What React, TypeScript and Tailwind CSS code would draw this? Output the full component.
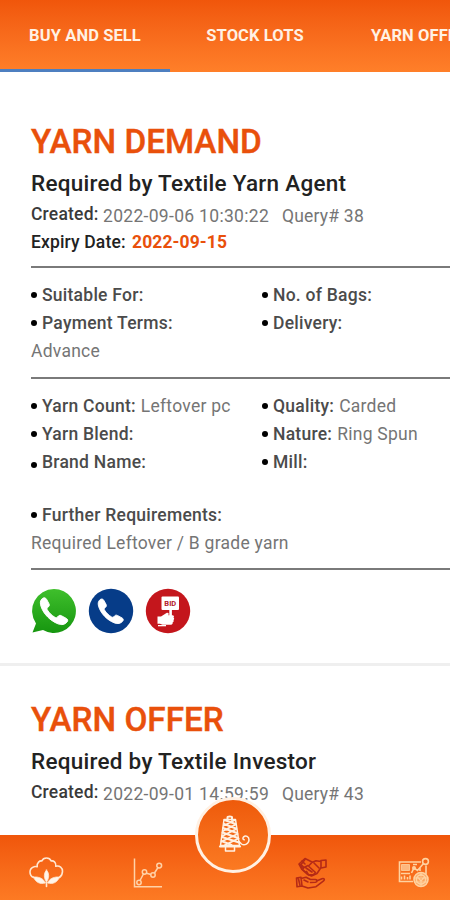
import React from "react";

const HANDSET =
  "M10.500 10.800c1.600-1.400 3.500-.9 4.400.8l2.500 4.600c.7 1.500 0 2.500-1.100 3.400-1.200.9-1.300 1.700-.7 2.700 1.900 3.200 4.600 5.700 7.800 7.600 1.100.6 1.900.6 2.700-.4 1.200-1.500 2.400-2 3.900-1.200l5 2.700c1.600.9 1.900 2.200.8 3.600-2.300 2.800-5.600 3.400-9.200 2C18.800 33.500 12 27 9.200 18.800c-1-3.200-1.100-5.900 1.300-8z";

function WhatsAppIcon() {
  return (
    <svg className="h-[46px] w-[46px]" viewBox="0 0 46 46">
      <defs>
        <linearGradient id="wa" x1="0" y1="0" x2="0" y2="1">
          <stop offset="0" stopColor="#3fbf2c" />
          <stop offset="1" stopColor="#16960f" />
        </linearGradient>
      </defs>
      <path d="M23 1a22 22 0 1 1-11 41.100L1.500 44.500 5 35.500A22 22 0 0 1 23 1z" fill="url(#wa)" />
      <path d={HANDSET} fill="#fff" stroke="#fff" strokeWidth="1" transform="translate(1 0) scale(.98)" />
    </svg>
  );
}

function CallIcon() {
  return (
    <svg className="h-[46px] w-[46px]" viewBox="0 0 46 46">
      <circle cx="23" cy="23" r="22.200" fill="#063c88" />
      <path d={HANDSET} fill="#fff" stroke="#fff" strokeWidth="1" transform="translate(2.500 2) scale(.9)" />
    </svg>
  );
}

function BidIcon() {
  return (
    <svg className="h-[46px] w-[46px]" viewBox="0 0 46 46">
      <circle cx="23" cy="23" r="22.200" fill="#c4161c" />
      <rect x="16.500" y="8.500" width="17.500" height="13.500" rx="1" fill="#fff" />
      <text x="25.300" y="18" textAnchor="middle" fontSize="7.500" fontWeight="700" fill="#b3202a" fontFamily="Roboto, sans-serif">BID</text>
      <path d="M24.300 21h2.600v7h-2.600z" fill="#fff" />
      <path d="M12.500 28.500h3.500l5.500-3.500c1.400-.7 2.800.4 2 1.700l-.2.500h4.200c1.500 0 2 1.700.9 2.400 1 .6 1 1.900 0 2.400.7.9.3 2-.7 2.300.2 1.500-.5 2.500-1.700 2.500h-8.500l-2.500-1h-2.500z" fill="#fff" />
      <path d="M13 37h8v1.300h-8z" fill="#fff" />
    </svg>
  );
}

function CottonIcon() {
  return (
    <svg className="h-[34px] w-[36px]" viewBox="0 0 36 34" fill="none" stroke="#ffe6cf" strokeWidth="1.600" strokeLinecap="round" strokeLinejoin="round">
      <path d="M5.500 21.500C1 19.500.5 12.500 6 10.800c1-.4 2-.3 3.200 0C8.500 6.500 12 4.500 13.800 5 15.500 1 21.500 1 23.200 5c2-.6 5.300 1.200 4.600 5.300 4-1 6.700 1.500 6.700 5 0 2.700-1 4.700-3 6.200" />
      <path d="M18.500 14c-2.800 3-3 8 0 12 3-4 2.800-9 0-12z" fill="#fff5ea" strokeWidth=".8" />
      <path d="M5.500 21c2 5.500 6.500 7.500 12 6-2-4.500-6.500-6.500-12-6zM31.500 21c-2 5.500-6.500 7.500-12 6 2-4.500 6.500-6.500 12-6z" fill="#fff5ea" strokeWidth=".8" />
      <path d="M18.500 26v4.500" />
    </svg>
  );
}

function ChartIcon() {
  return (
    <svg className="h-[32px] w-[32px]" viewBox="0 0 32 32" fill="none" stroke="#ffd2a8" strokeWidth="1.500">
      <path d="M2.500 1.500v28.300H30" />
      <path d="M8 23.500l3.700-7M14.500 16.200l4.500 1.300M22.500 16l3.500-5.500" />
      <circle cx="7" cy="25.500" r="2.200" />
      <circle cx="12.500" cy="15" r="2.200" />
      <circle cx="21" cy="18" r="2.200" />
      <circle cx="27.200" cy="8.600" r="2.400" />
    </svg>
  );
}

function HandsIcon() {
  return (
    <svg className="h-[34px] w-[36px]" viewBox="0 0 36 34" fill="none" stroke="#b52a16" strokeWidth="1.600" strokeLinecap="round" strokeLinejoin="round">
      <path d="M32 4v7l-5 1V4.500zM27 5.500l-5-.8-3.500 1.600L11 2.500 5 8l3 5.500 5 4.500 4.500 2 5.500-2.500 4-6" />
      <path d="M11 3.500L7 8.500l3 3 4-2 2 2 5.500 5M10 11.500L8.500 13.500l3 2.500M12 12l6 4M20 7l5 5M17.500 7l-3 3M12.500 15.500l2 3.500 5-.5 2-2M8 5l3 3M6 8.500l2 3" />
      <path d="M2.500 22l4.500-.7 1 8.700-5 .8zM7 22.500l5-1.200 4.500 2.200h5c2 0 2.200 2.500 0 2.800l-5 .2M22.500 25l5.500-2.300c2-.7 3.200 1 1.600 2.200L22 30.700l-8 1.300-6-2M4.500 23l1.400 6M10 24l4 2" />
    </svg>
  );
}

function BoardIcon() {
  return (
    <svg className="h-[34px] w-[34px]" viewBox="0 0 34 34" fill="none" stroke="#ffd2a0" strokeWidth="1.600">
      <path d="M25 6H3.500v19.500H17M30 9.500V18" />
      <path d="M5.500 8.500h8v6h-8z" fill="#ffd2a0" fillOpacity=".75" strokeWidth=".8" />
      <path d="M5 17.500h9M5.500 23.500v-3M8.500 23.500v-4M11.500 23.500v-2.500M14 23.500v-4M15.500 17l2.500-5 3.500 2.500 6-7M17 8.500h4M24 12v3" />
      <circle cx="29.500" cy="5.500" r="2.900" />
      <circle cx="18" cy="12" r="1.200" />
      <circle cx="25" cy="23.500" r="7" fill="#fba45f" />
      <circle cx="25" cy="23.500" r="4.600" />
      <path d="M18 22h14M18.500 26h13M25 16.500v4M21.500 21l3.500 4 3.500-4M25 25v5" strokeWidth="1.200" />
    </svg>
  );
}

function SpoolIcon() {
  return (
    <svg className="h-[40px] w-[34px]" viewBox="0 0 34 40" fill="none" stroke="#fff1e2" strokeWidth="1.500" strokeLinecap="round" strokeLinejoin="round">
      <path d="M9.500 5V2.500c0-1.300 4.500-1.300 4.500 0V5" strokeWidth="2" />
      <path d="M6 4.500h11.500l4 26H2.500z" />
      <path d="M6.500 5l11 4M6 9l12 4.500M5 13l14 5M4.500 17.500l15.500 5.500M4 22l17 5.500M3.500 26l10 4M17 5L6 10.500M17.800 9.500L5 16M18.400 14L4.300 21M19.500 19L3.500 26.500M20.500 23.500L7 30" strokeWidth="1.900" />
      <path d="M2 31.500h20" strokeWidth="2.200" />
      <path d="M7.500 32.500v3.500h9v-3.500M21 26.500l2.500 2.500c3 2 7.500-.5 7.500-4.200 0-3.300-3.300-5-5.600-2.700-.8 1-.6 2.500.8 2.700" />
    </svg>
  );
}

function Bullet({ low = false }: { low?: boolean }) {
  return (
    <span className={`mr-[5px] size-[6px] shrink-0 self-center rounded-full bg-black ${low ? "mt-[6px]" : ""}`} />
  );
}

function Field({ label, value, low }: { label: string; value?: string; low?: boolean }) {
  return (
    <div className="flex h-7 whitespace-pre text-[17.500px] leading-7 tracking-[0.250px]">
      <Bullet low={low} />
      <span className="font-medium text-[#4b4b4b]">{label}</span>
      {value && <span className="ml-[5px] text-[#757575]">{value}</span>}
    </div>
  );
}

function Note({ children }: { children: string }) {
  return <div className="h-7 text-[17.500px] leading-7 tracking-[0.250px] text-[#757575]">{children}</div>;
}

function Heading({ title, by, created, query }: { title: string; by: string; created: string; query: string }) {
  return (
    <>
      <h2 className="h-[44px] text-[33.300px] leading-[44px] font-medium text-[#e9500b] [-webkit-text-stroke:0.400px_#e9500b]">{title}</h2>
      <h3 className="h-[38px] text-[22.500px] leading-[38px] font-medium tracking-[0.260px] text-[#222]">{by}</h3>
      <div className="flex h-7 text-[17.500px] leading-[25px] text-[#757575]">
        <span className="w-[72px] font-medium tracking-[0.200px] text-[#3a3a3a]">Created:</span>
        <span className="w-[179px] pt-[2px] tracking-[0.310px]">{created}</span>
        <span className="pt-[2px] tracking-[0.200px]">{query}</span>
      </div>
    </>
  );
}

function Rule() {
  return <div className="h-[2px] w-full bg-[#7a7a7a]" />;
}

export default function App() {
  return (
    <div className="relative flex h-[900px] w-[450px] flex-col overflow-hidden bg-white font-['Roboto',sans-serif] whitespace-nowrap">
      <header className="flex h-[72px] shrink-0 bg-linear-to-b from-[#f0560b] to-[#ff7f29] text-[16.500px] leading-[71px] font-bold tracking-[0.100px] text-[#fff1e4]">
        <div className="w-[170px] shrink-0 border-b-3 border-[#4d7fc0] text-center">BUY AND SELL</div>
        <div className="w-[170px] shrink-0 text-center">STOCK LOTS</div>
        <div className="shrink-0 pl-[31px]">YARN OFFER</div>
      </header>

      <section className="h-[594px] shrink-0 border-b-3 border-[#efefef] pt-[48px] pl-[31px]">
        <Heading title="YARN DEMAND" by="Required by Textile Yarn Agent" created="2022-09-06 10:30:22" query="Query# 38" />
        <div className="flex h-[36px] text-[17.500px] leading-[24px] font-medium">
          <span className="w-[101px] tracking-[0.150px] text-[#222]">Expiry Date:</span>
          <span className="font-bold tracking-[0.100px] text-[#e9500b]">2022-09-15</span>
        </div>
        <Rule />
        <div className="grid grid-cols-[231px_1fr] pt-[13px] pb-[12px]">
          <Field label="Suitable For:" />
          <Field label="No. of Bags:" />
          <Field label="Payment Terms:" />
          <Field label="Delivery:" />
          <Note>Advance</Note>
        </div>
        <Rule />
        <div className="grid grid-cols-[231px_1fr] pt-[13px]">
          <Field label="Yarn Count:" value="Leftover pc" />
          <Field label="Quality:" value="Carded" />
          <Field label="Yarn Blend:" />
          <Field label="Nature:" value="Ring Spun" />
          <Field label="Brand Name:" low />
          <Field label="Mill:" />
        </div>
        <div className="pt-[25px] pb-[11px]">
          <Field label="Further Requirements:" />
          <Note>Required Leftover / B grade yarn</Note>
        </div>
        <Rule />
        <div className="flex gap-[11px] pt-[18px]">
          <WhatsAppIcon />
          <CallIcon />
          <BidIcon />
        </div>
      </section>

      <section className="h-[169px] shrink-0 overflow-hidden pt-[32px] pl-[31px]">
        <Heading title="YARN OFFER" by="Required by Textile Investor" created="2022-09-01 14:59:59" query="Query# 43" />
      </section>

      <nav className="flex h-[65px] shrink-0 items-center justify-between bg-linear-to-b from-[#f0560b] to-[#fd7a23] pt-[10px] pr-[20px] pl-[28px]">
        <CottonIcon />
        <div className="mr-[130px] ml-[68px]"><ChartIcon /></div>
        <HandsIcon />
        <div className="ml-[66px]"><BoardIcon /></div>
      </nav>

      <div className="absolute top-[797px] left-[195px] flex size-[76px] items-center justify-center rounded-full border-[3px] border-[#fff1e4] bg-linear-to-b from-[#ee5a0a] to-[#fb7a22] pl-[4px]">
        <SpoolIcon />
      </div>
    </div>
  );
}
